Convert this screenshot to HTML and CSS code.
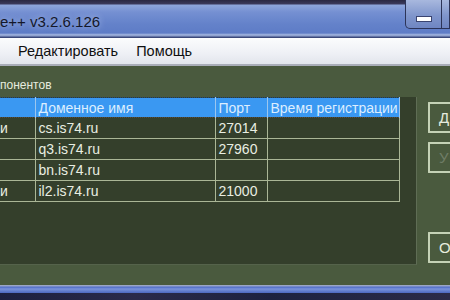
FILE: index.html
```html
<!DOCTYPE html>
<html>
<head>
    <meta charset="utf-8">
    <title>Server Manager</title>
    <link rel="stylesheet" href="styles.css">
</head>
<body>
    <div class="titlebar">
        <span class="title">e++ v3.2.6.126</span>
        <div class="caption-buttons">
            <div class="cap-btn minimize"><span class="dash"></span></div>
            <div class="cap-btn maximize"></div>
        </div>
    </div>

    <div class="menubar">
        <span class="menu-item">Редактировать</span>
        <span class="menu-item">Помощь</span>
    </div>

    <div class="client">
        <div class="group-label">понентов</div>

        <div class="content-row">
            <div class="list-panel">
                <table class="server-list">
                    <thead>
                        <tr>
                            <th class="col-name"></th>
                            <th class="col-domain">Доменное имя</th>
                            <th class="col-port">Порт</th>
                            <th class="col-time">Время регистрации</th>
                        </tr>
                    </thead>
                    <tbody>
                        <tr>
                            <td class="cut">и</td>
                            <td>cs.is74.ru</td>
                            <td>27014</td>
                            <td></td>
                        </tr>
                        <tr>
                            <td class="cut"></td>
                            <td>q3.is74.ru</td>
                            <td>27960</td>
                            <td></td>
                        </tr>
                        <tr>
                            <td class="cut"></td>
                            <td>bn.is74.ru</td>
                            <td></td>
                            <td></td>
                        </tr>
                        <tr>
                            <td class="cut">и</td>
                            <td>il2.is74.ru</td>
                            <td>21000</td>
                            <td></td>
                        </tr>
                    </tbody>
                </table>
            </div>

            <div class="side-buttons">
                <button type="button" class="side-btn">Д</button>
                <button type="button" class="side-btn" disabled>У</button>
                <button type="button" class="side-btn last">О</button>
            </div>
        </div>
    </div>

    <div class="frame-bottom"></div>
    <div class="desktop"></div>
</body>
</html>
```

FILE: styles.css
```css
body {
    margin: 0;
    width: 450px;
    height: 300px;
    overflow: hidden;
    background: #1f2038;
    font-family: "Liberation Sans", Arial, sans-serif;
}

/* window caption */
.titlebar {
    height: 38px;
    display: flex;
    align-items: flex-start;
    background: linear-gradient(to bottom,
        #2a2842 0, #3b3a5c 4px, #8ea6dc 5px, #7590d2 12px,
        #6482ca 24px, #5e7cc6 33px, #a9bbe2 35px, #4b5c92 37px, #2c3560 38px);
}

.title {
    margin-top: 13px;
    font-size: 15px;
    color: #14182a;
    text-shadow: 0 0 6px rgba(220, 230, 255, 0.7);
}

.caption-buttons {
    margin-left: auto;
    display: flex;
}

.cap-btn {
    height: 28px;
    border: 1px solid #2c3458;
    border-top: none;
    background: linear-gradient(to bottom, #a8b8de, #8096cc 55%, #6f86c2);
}

.minimize {
    width: 35px;
    border-bottom-left-radius: 5px;
    display: flex;
    justify-content: center;
    align-items: flex-end;
}

.dash {
    width: 16px;
    height: 6px;
    margin-bottom: 6px;
    background: #ffffff;
    border: 1px solid #3a4470;
    box-sizing: border-box;
}

.maximize {
    width: 7px;
    border-left: none;
}

/* menu */
.menubar {
    height: 28px;
    display: flex;
    align-items: center;
    padding-left: 9px;
    background: linear-gradient(to bottom, #fbfcfd, #eef0f5 60%, #e2e5ec);
    border-bottom: 2px solid #a9adb8;
    box-sizing: border-box;
}

.menu-item {
    padding: 0 9px;
    font-size: 14.5px;
    color: #101010;
}

/* client area */
.client {
    height: 219px;
    background: #4a5a3e;
}

.group-label {
    height: 31px;
    padding-top: 12px;
    box-sizing: border-box;
    font-size: 12px;
    line-height: 14px;
    color: #e6ecdf;
}

.content-row {
    display: flex;
}

.list-panel {
    flex-shrink: 0;
    width: 417px;
    height: 168px;
    background: #343f2b;
    border-right: 1px solid #5f6d55;
    border-bottom: 1px solid #55634b;
    box-sizing: border-box;
}

.server-list {
    border-collapse: collapse;
    table-layout: fixed;
    width: 399px;
    font-size: 14px;
    color: #e9eee2;
}

.server-list th {
    height: 20px;
    padding: 0 3px;
    text-align: left;
    font-weight: normal;
    color: #dceeff;
    background: #3a98f2;
    border-top: 1px dotted #254a78;
    border-bottom: 1px dotted #5a4a3a;
    border-right: 1px solid #9cc6ee;
    white-space: nowrap;
    overflow: hidden;
    box-sizing: border-box;
}

.server-list td {
    height: 21px;
    padding: 0 3px;
    border: 1px solid #aab696;
    border-top: none;
    box-sizing: border-box;
    white-space: nowrap;
}

.server-list td.cut {
    padding: 0;
    border-left: none;
}

.col-name { width: 35px; }
.col-domain { width: 180px; }
.col-port { width: 52px; }
.col-time { width: 132px; }

/* buttons on the right */
.side-buttons {
    flex-shrink: 0;
    margin-left: 11px;
    padding-top: 5px;
    display: flex;
    flex-direction: column;
    gap: 9px;
}

.side-btn {
    width: 40px;
    height: 31px;
    padding: 0 0 0 9px;
    text-align: left;
    font-family: "Liberation Sans", Arial, sans-serif;
    font-size: 15px;
    color: #e6ecdf;
    background: #4a5a3e;
    border: 2px solid #c5d2b6;
    border-right: none;
    border-radius: 1px;
}

.side-btn:disabled {
    color: #6f7d66;
}

.side-btn.last {
    margin-top: 50px;
}

/* lower window frame */
.frame-bottom {
    height: 8px;
    background: linear-gradient(to bottom, #9aa6c8 0, #9aa6c8 1px, #4f6cc8 2px, #7a94dc 4px, #4c68c0 8px);
}

.desktop {
    height: 9px;
    background: linear-gradient(to right, #1c2040, #2a2a4a 30%, #1d2240 60%, #2b2b48);
}
```
